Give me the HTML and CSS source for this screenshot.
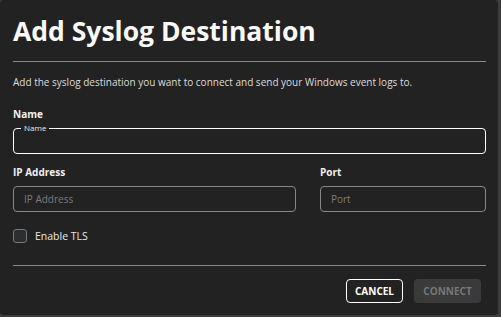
FILE: index.html
```html
<!DOCTYPE html>
<html lang="en">

<head>
  <meta charset="UTF-8">
  <meta name="viewport" content="width=device-width, initial-scale=1.0">
  <title>Add Syslog Destination</title>
  <link rel="stylesheet" href="styles.css">
</head>

<body>
  <div class="dialog">
    <div class="header">Add Syslog Destination</div>
    <div class="content">
      <p class="intro">Add the syslog destination you want to connect and send your Windows event logs to.</p>

      <div class="field">
        <label class="field-label" for="name">Name</label>
        <fieldset class="outlined focused">
          <legend>Name</legend>
          <input type="text" id="name">
        </fieldset>
      </div>

      <div class="row">
        <div class="field grow">
          <label class="field-label" for="ip">IP Address</label>
          <div class="outlined">
            <input type="text" id="ip" placeholder="IP Address">
          </div>
        </div>
        <div class="field port">
          <label class="field-label" for="port">Port</label>
          <div class="outlined">
            <input type="text" id="port" placeholder="Port">
          </div>
        </div>
      </div>

      <label class="check">
        <span class="box"></span>
        Enable TLS
      </label>
    </div>
    <div class="actions">
      <button class="btn btn-outline">CANCEL</button>
      <button class="btn btn-disabled" disabled>CONNECT</button>
    </div>
  </div>
</body>

</html>
```

FILE: styles.css
```css
body {
  margin: 0;
  background: #3c3c3c;
  font-family: "Open Sans", "Liberation Sans", sans-serif;
  color: #e8e8e8;
}

.dialog {
  width: 498px;
  height: 315px;
  box-sizing: border-box;
  background: #222222;
  border-radius: 4px;
  padding: 0 12px 0 13px;
  display: flex;
  flex-direction: column;
}

.header {
  font-size: 26.5px;
  font-weight: 700;
  color: #fafafa;
  height: 62px;
  box-sizing: border-box;
  padding-top: 13px;
  border-bottom: 1px solid #8a8a8a;
}

.content {
  padding-top: 13px;
  border-bottom: 1px solid #8a8a8a;
  padding-bottom: 22px;
}

.intro {
  margin: 0 0 18px;
  font-size: 10px;
  color: #dcdcdc;
}

.field-label {
  display: block;
  font-size: 10px;
  font-weight: 700;
  color: #f0f0f0;
  margin-bottom: 7px;
}

.field {
  margin-bottom: 10px;
}

.outlined {
  margin: 0;
  height: 26px;
  box-sizing: border-box;
  border: 1px solid #888;
  border-radius: 4px;
  padding: 0 10px;
  display: flex;
  align-items: center;
}

fieldset.outlined {
  padding: 0 7px;
  position: relative;
  top: -4px;
  height: 30px;
  margin-top: 1px;
  margin-bottom: -3px;
}

.outlined.focused {
  border: 1.5px solid #fff;
}

legend {
  font-size: 8px;
  padding: 0 3px;
  color: #e8e8e8;
  line-height: 8px;
}

input {
  width: 100%;
  background: transparent;
  border: 0;
  outline: 0;
  color: #eee;
  font-family: inherit;
  font-size: 10px;
  padding: 0;
}

input::placeholder {
  color: #7c7c7c;
}

.row {
  display: flex;
  gap: 24px;
}

.grow {
  flex: 1;
}

.port {
  width: 166px;
}

.check {
  display: flex;
  align-items: center;
  gap: 8px;
  font-size: 10.5px;
  color: #e8e8e8;
  margin-top: 7px;
}

.box {
  width: 12px;
  height: 12px;
  border: 1px solid #777;
  border-radius: 3px;
  background: #2c2f31;
}

.actions {
  display: flex;
  justify-content: flex-end;
  gap: 11px;
  padding: 13px 5px 0 0;
}

.btn {
  font-family: inherit;
  font-size: 10px;
  font-weight: 700;
  height: 24px;
  border-radius: 4px;
  padding: 0;
}

.btn-outline {
  background: transparent;
  border: 1px solid #fff;
  color: #fff;
  width: 57px;
}

.btn-disabled {
  background: #3a3a3a;
  border: 0;
  color: #777;
  width: 67px;
}
```
